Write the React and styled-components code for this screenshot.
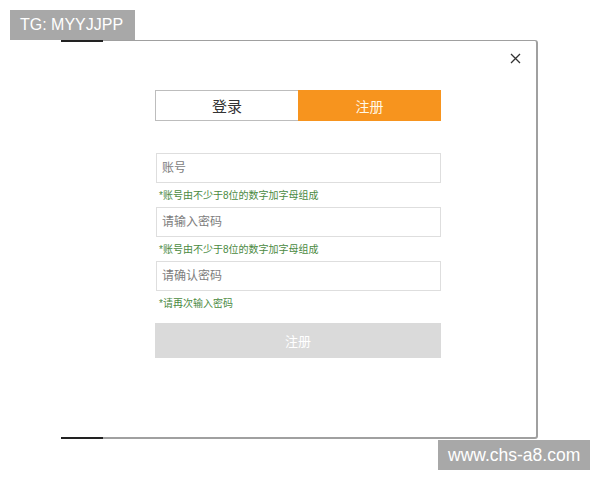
import styled, { createGlobalStyle } from "styled-components";

const GlobalStyle = createGlobalStyle`
  html, body {
    margin: 0;
    padding: 0;
    background: #fff;
  }
  body {
    font-family: "Liberation Sans", "Noto Sans CJK SC", sans-serif;
  }
`;

function App() {
  return (
    <Page>
      <GlobalStyle />
      <Mark $top>TG: MYYJJPP</Mark>
      <Dialog>
        <Close aria-label="close">
          <svg width="11" height="11" viewBox="0 0 11 11">
            <path d="M1 1 L10 10 M10 1 L1 10" stroke="#333" strokeWidth="1.3" fill="none" />
          </svg>
        </Close>
        <Form>
          <Tabs>
            <Tab>登录</Tab>
            <Tab $active>注册</Tab>
          </Tabs>
          <Fields>
            <Input placeholder="账号" />
            <Hint>*账号由不少于8位的数字加字母组成</Hint>
            <Input type="password" placeholder="请输入密码" />
            <Hint>*账号由不少于8位的数字加字母组成</Hint>
            <Input type="password" placeholder="请确认密码" />
            <Hint>*请再次输入密码</Hint>
          </Fields>
          <Submit>注册</Submit>
        </Form>
      </Dialog>
      <Mark>www.chs-a8.com</Mark>
    </Page>
  );
}

const Page = styled.div`
  position: relative;
  width: 600px;
  height: 480px;
  overflow: hidden;
  padding-top: 40px;
  box-sizing: border-box;
`;

const Mark = styled.div`
  position: absolute;
  ${(p) =>
    p.$top
      ? "top: 10px; left: 10px; width: 125px; font-size: 16px;"
      : "top: 440px; left: 438px; width: 152px; font-size: 17.5px;"}
  height: 30px;
  box-sizing: border-box;
  padding-left: 10px;
  background: #a8a8a8;
  color: #fff;
  line-height: 30px;
  white-space: nowrap;
  z-index: 2;
`;

const Dialog = styled.div`
  position: relative;
  margin-left: 61px;
  width: 477px;
  height: 399px;
  box-sizing: border-box;
  background: #fff;
  border-top: 1px solid #a0a0a0;
  border-right: 2px solid #a0a0a0;
  border-bottom: 2px solid #a0a0a0;
  border-radius: 0 3px 3px 0;
  padding: 49px 0 0 94px;

  &::before,
  &::after {
    content: "";
    position: absolute;
    left: 0;
    width: 42px;
    height: 2px;
    background: #222;
  }
  &::before {
    top: -1px;
  }
  &::after {
    bottom: -2px;
  }
`;

const Close = styled.div`
  position: absolute;
  top: 12px;
  right: 15px;
  width: 11px;
  height: 11px;
  display: flex;
`;

const Form = styled.div`
  width: 286px;
  display: flex;
  flex-direction: column;
`;

const Tabs = styled.div`
  display: grid;
  grid-template-columns: 143px 143px;
  height: 31px;
`;

const Tab = styled.div`
  display: flex;
  align-items: center;
  justify-content: center;
  box-sizing: border-box;
  font-size: ${(p) => (p.$active ? "14px" : "15px")};
  color: ${(p) => (p.$active ? "#fff8e8" : "#333")};
  background: ${(p) => (p.$active ? "#f7941e" : "#fff")};
  border: 1px solid ${(p) => (p.$active ? "#f7941e" : "#bdbdbd")};
  border-right: ${(p) => (p.$active ? "" : "none")};
`;

const Fields = styled.div`
  display: flex;
  flex-direction: column;
  margin-top: 32px;
  padding-left: 1px;
`;

const Input = styled.input`
  height: 30px;
  width: 285px;
  box-sizing: border-box;
  border: 1px solid #dedede;
  outline: none;
  padding: 0 5px;
  font-family: inherit;
  font-size: 12px;
  color: #333;
  background: #fff;

  &::placeholder {
    color: #7d7d7d;
  }
`;

const Hint = styled.div`
  height: 24px;
  line-height: 25px;
  padding-left: 3px;
  font-size: 10px;
  color: #4a8a3f;
`;

const Submit = styled.div`
  margin-top: 8px;
  height: 35px;
  display: flex;
  align-items: center;
  justify-content: center;
  background: #dadada;
  color: #fff;
  font-size: 13px;
`;

export default App;
